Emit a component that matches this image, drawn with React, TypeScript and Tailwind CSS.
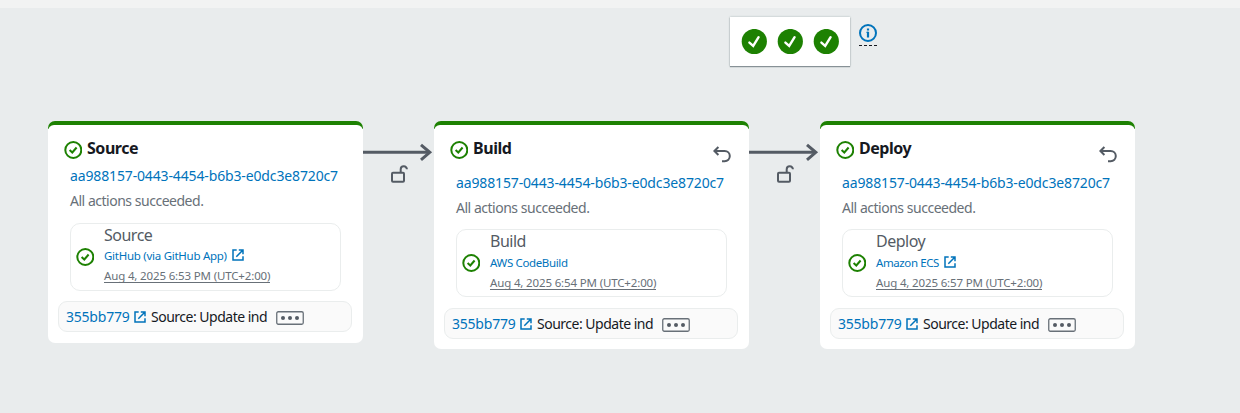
import React from "react";

type Stage = {
  name: string;
  provider: string;
  external: boolean;
  time: string;
  retry: boolean;
  providerTracking: string;
};

const stages: Stage[] = [
  {
    name: "Source",
    provider: "GitHub (via GitHub App)",
    external: true,
    time: "Aug 4, 2025 6:53 PM (UTC+2:00)",
    retry: false,
    providerTracking: "tracking-[-0.27px]",
  },
  {
    name: "Build",
    provider: "AWS CodeBuild",
    external: false,
    time: "Aug 4, 2025 6:54 PM (UTC+2:00)",
    retry: true,
    providerTracking: "tracking-[-0.35px]",
  },
  {
    name: "Deploy",
    provider: "Amazon ECS",
    external: true,
    time: "Aug 4, 2025 6:57 PM (UTC+2:00)",
    retry: true,
    providerTracking: "tracking-[-0.4px]",
  },
];

function StatusIcon() {
  return (
    <svg width="18" height="18" viewBox="0 0 18 18" fill="none" stroke="#1d8102" strokeWidth="2" className="shrink-0">
      <circle cx="9.3" cy="9" r="8" />
      <path d="M5.6 9 8.3 11.5l4.3-5" />
    </svg>
  );
}

function DoneBadge() {
  return (
    <svg width="26" height="26" viewBox="0 0 26 26" fill="none" className="shrink-0">
      <circle cx="13.3" cy="12.5" r="12.6" fill="#1d8102" />
      <path d="M8.4 13.6 12.2 16.9 17.6 8.2" stroke="#fff" strokeWidth="2.4" strokeLinecap="round" />
    </svg>
  );
}

function ExternalIcon() {
  return (
    <svg width="12" height="12" viewBox="0 0 12 12" fill="none" stroke="#0073bb" strokeWidth="1.5" className="shrink-0">
      <path d="M4.7 1H1v10h10V7.3M6.8 1H11v4.2M11 1 4.3 7.7" />
    </svg>
  );
}

function RetryIcon() {
  return (
    <svg width="18" height="17" viewBox="0 0 18 17" fill="none" stroke="#545b64" strokeWidth="2">
      <path d="M5.4 1 1.4 5l4 4M1.5 5h10.2a5.1 5.1 0 0 1 0 10.2H9" />
    </svg>
  );
}

function Connector() {
  return (
    <div className="flex w-[71px] shrink-0 flex-col items-start pt-[22px]">
      <svg width="70" height="18" viewBox="0 0 70 18" fill="none" stroke="#545b64">
        <path d="M0 9.3h66" strokeWidth="3" />
        <path d="m58 1.8 8.8 7.5-8.8 7.5" strokeWidth="3" />
      </svg>
      <svg width="18" height="19" viewBox="0 0 18 19" fill="none" stroke="#545b64" strokeWidth="2" className="ml-[28px] mt-[4px]">
        <rect x="1" y="7.8" width="12" height="9" rx="1" />
        <path d="M9.7 8V4.3a3 3 0 0 1 3-3h.2a3 3 0 0 1 3 3" />
      </svg>
    </div>
  );
}

function StageCard({ stage }: { stage: Stage }) {
  return (
    <section
      className={`w-[315px] shrink-0 rounded-[7px] bg-[linear-gradient(#1d8102_8px,#fff_8px)] pt-[4px] ${
        stage.retry ? "h-[228px]" : "h-[222px]"
      }`}
    >
      <div className="flex flex-col rounded-t-[6px] bg-white">
        <header className={`flex shrink-0 pl-[16px] pr-[18px] ${stage.retry ? "h-[48px]" : "h-[41px]"}`}>
          <div className="pt-[16px]">
            <StatusIcon />
          </div>
          <h2 className="ml-[5px] mt-[13px] grow text-base leading-[20px] font-bold tracking-[-0.45px] text-[#16191f]">
            {stage.name}
          </h2>
          {stage.retry && (
            <div className="pt-[21px]">
              <RetryIcon />
            </div>
          )}
        </header>
        <a className="ml-[22px] h-[20px] text-sm leading-[20px] whitespace-nowrap tracking-[-0.14px] text-[#0073bb]">
          aa988157-0443-4454-b6b3-e0dc3e8720c7
        </a>
        <p className="ml-[22px] h-[30px] text-sm leading-[30px] whitespace-nowrap tracking-[-0.48px] text-[#687078]">
          All actions succeeded.
        </p>
        <div
          className={`ml-[22px] flex h-[68px] w-[271px] shrink-0 items-center rounded-[10px] border border-[#eaeded] pl-[5px] ${
            stage.retry ? "mt-[6px]" : "mt-[7px]"
          }`}
        >
          <StatusIcon />
          <div className="ml-[10px] flex h-full flex-col whitespace-nowrap">
            <div
              className={`mt-[1px] text-base leading-[20px] tracking-[-0.5px] text-[#545b64] ${
                stage.retry ? "h-[22px]" : "h-[21px]"
              }`}
            >
              {stage.name}
            </div>
            <div className="flex h-[20px] items-center gap-[5px]">
              <a className={`text-[11.5px] leading-[20px] text-[#0073bb] ${stage.providerTracking}`}>{stage.provider}</a>
              {stage.external && (
                <span className="pb-[3px]">
                  <ExternalIcon />
                </span>
              )}
            </div>
            <div>
              <span className="block h-[17px] w-fit border-b border-[#687078] text-[11.5px] leading-[20px] tracking-[-0.15px] text-[#687078]">
                {stage.time}
              </span>
            </div>
          </div>
        </div>
        <div
          className={`ml-[10px] flex h-[31px] w-[294px] shrink-0 items-center rounded-[9px] border border-[#eaeded] bg-[#fafafa] pl-[7px] text-sm whitespace-nowrap ${
            stage.retry ? "mt-[11px]" : "mt-[10px]"
          }`}
        >
          <a className="w-[68px] tracking-[-0.22px] text-[#0073bb]">355bb779</a>
          <ExternalIcon />
          <span className="ml-[5px] w-[125px] tracking-[-0.5px] text-[#16191f]">Source: Update ind</span>
          <svg width="28" height="14" viewBox="0 0 28 14" fill="none" className="mt-[3px]">
            <rect x=".75" y=".75" width="26.5" height="12.5" rx="1.5" stroke="#687078" strokeWidth="1.3" />
            <g fill="#545b64">
              <circle cx="7" cy="7" r="2" />
              <circle cx="14" cy="7" r="2" />
              <circle cx="21" cy="7" r="2" />
            </g>
          </svg>
        </div>
      </div>
    </section>
  );
}

export default function App() {
  return (
    <main className="h-[413px] w-[1240px] overflow-hidden border-t-8 border-[#f2f3f3] bg-[#e9eced] font-['Noto_Sans',sans-serif]">
      <div className="flex h-[113px] pl-[730px] pt-[9px]">
        <div className="flex h-[49px] w-[120px] items-center justify-center gap-[10px] bg-white shadow-[0_1px_1px_#879196,0_0_2px_#aab7b8]">
          <DoneBadge />
          <DoneBadge />
          <DoneBadge />
        </div>
        <div className="ml-[9px] mt-[7px] h-[22px] w-[18px] border-b border-dashed border-[#16191f]">
          <svg width="18" height="18" viewBox="0 0 18 18" fill="none" stroke="#0073bb" strokeWidth="2">
            <circle cx="9" cy="9" r="8" />
            <path d="M9 7.8V13.6M9 4.6v2" strokeWidth="2.2" />
            <path d="M7.4 8.3H9" strokeWidth="1" />
          </svg>
        </div>
      </div>
      <div className="flex items-start pl-[48px]">
        {stages.map((stage, i) => (
          <React.Fragment key={stage.name}>
            {i > 0 && <Connector />}
            <StageCard stage={stage} />
          </React.Fragment>
        ))}
      </div>
    </main>
  );
}
